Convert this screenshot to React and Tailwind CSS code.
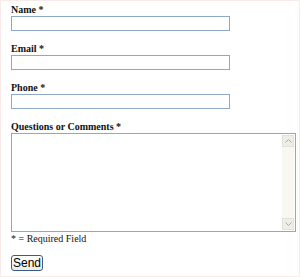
export default function App() {
  const fields = ["Name", "Email", "Phone"];

  return (
    <div className="w-[300px] h-[277px] bg-white border border-[#fbeaea] font-['Liberation_Serif',serif] text-[10px] text-[#111]">
      <form className="pl-[10px] pt-[3px] flex flex-col">
        {fields.map((f) => (
          <div key={f} className="flex flex-col mb-[12px]">
            <label className="font-bold leading-[12px] h-[12px]">{f} *</label>
            <input
              type="text"
              className="w-[219px] h-[15px] border border-[#8ea9c6] bg-white outline-none"
            />
          </div>
        ))}
        <div className="flex flex-col">
          <label className="font-bold leading-[12px] h-[12px]">Questions or Comments *</label>
          <div className="w-[285px] h-[99px] border border-[#8ea9c6] flex bg-white">
            <textarea className="flex-1 resize-none outline-none border-0" />
            <div className="w-[12px] my-[1px] mr-[1px] bg-[#f8f8f3] flex flex-col justify-between">
              <div className="h-[12px] bg-[#eeeee8] border border-[#e2e2da] flex items-center justify-center">
                <svg width="7" height="4" viewBox="0 0 7 4"><path d="M0.5 3.5 L3.5 0.5 L6.5 3.5" fill="none" stroke="#aaa" /></svg>
              </div>
              <div className="h-[12px] bg-[#eeeee8] border border-[#e2e2da] flex items-center justify-center">
                <svg width="7" height="4" viewBox="0 0 7 4"><path d="M0.5 0.5 L3.5 3.5 L6.5 0.5" fill="none" stroke="#aaa" /></svg>
              </div>
            </div>
          </div>
        </div>
        <p className="leading-[13px]">* = Required Field</p>
        <div className="mt-[10px]">
          <button
            type="button"
            className="h-[16px] px-[1px] rounded-[3px] border border-[#3b5c85] bg-gradient-to-b from-white to-[#ecebe6] font-['Liberation_Sans',sans-serif] text-[12px] leading-[12px] text-black"
          >
            Send
          </button>
        </div>
      </form>
    </div>
  );
}
